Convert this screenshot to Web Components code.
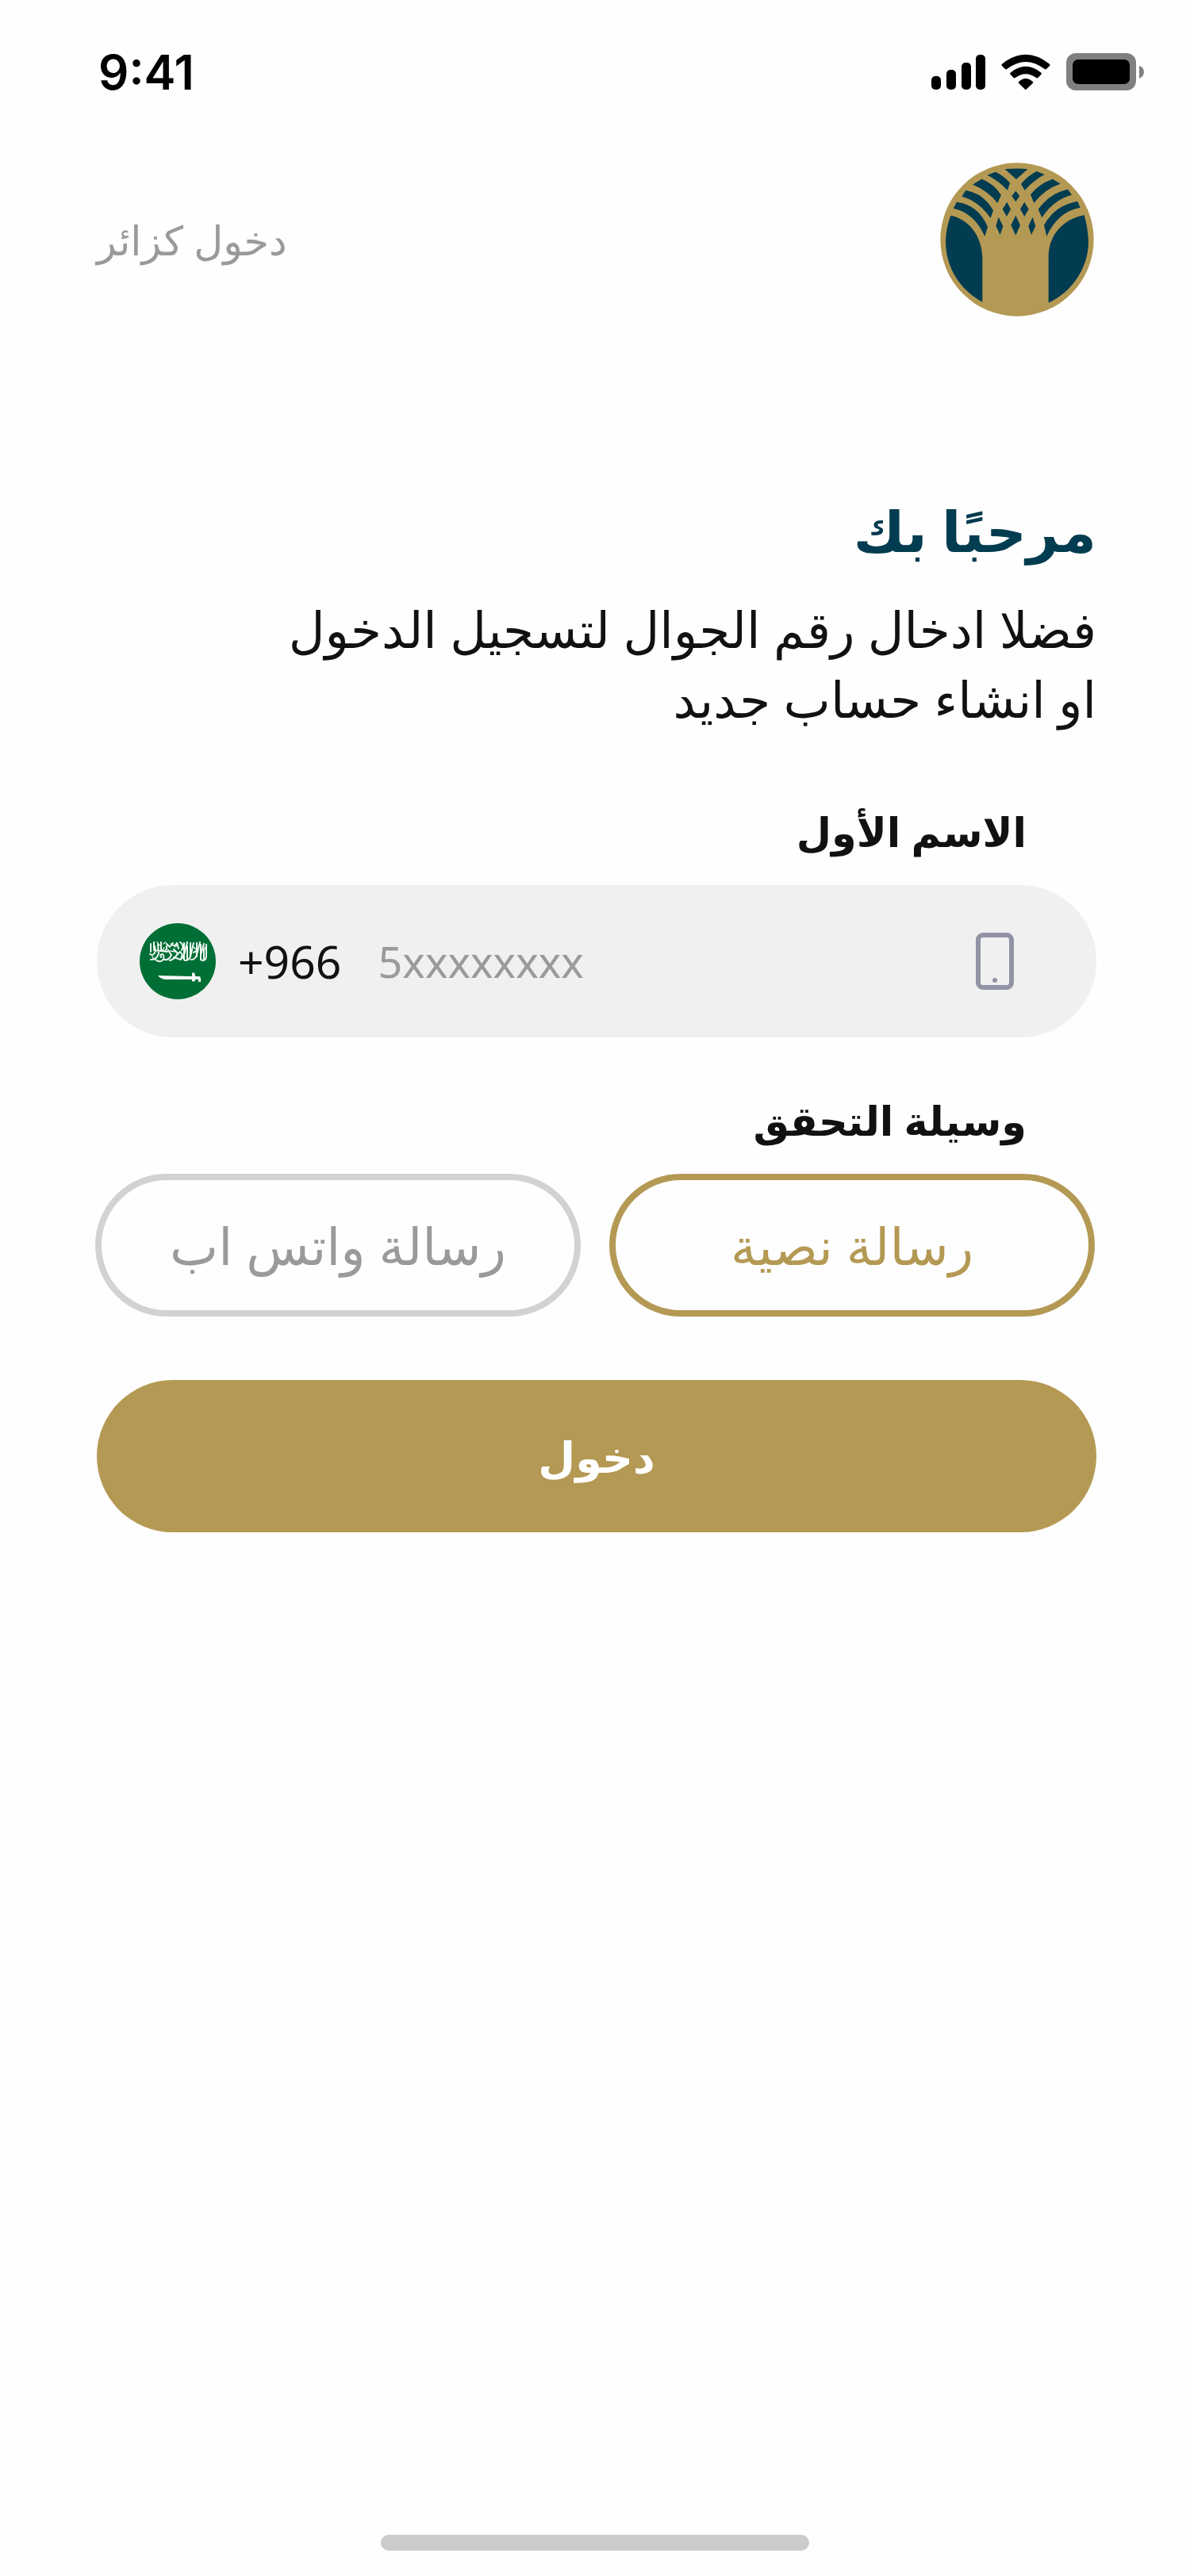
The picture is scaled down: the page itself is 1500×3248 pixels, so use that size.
<!DOCTYPE html>
<html lang="ar" dir="rtl">
<head>
<meta charset="utf-8">
<meta name="viewport" content="width=device-width, initial-scale=1">
<title>تسجيل الدخول</title>
<style>
  body { margin: 0; background: #fefefe; }
</style>
</head>
<body>
<login-page></login-page>
<script>
const define = (name, html) => {
  const template = document.createElement('template');
  template.innerHTML = html;
  customElements.define(name, class extends HTMLElement {
    constructor() {
      super();
      this.attachShadow({ mode: 'open' }).append(template.content.cloneNode(true));
    }
  });
};

define('status-bar', `
<style>
  :host { display: flex; direction: ltr; justify-content: space-between; align-items: center; height: 132px; padding: 50px 58px 0 124px; box-sizing: border-box; }
  time { font: 600 60px/82px Inter, sans-serif; color: #000; }
  .icons { display: flex; align-items: center; gap: 20px; }
  svg { display: block; }
</style>
<time>9:41</time>
<div class="icons">
  <svg width="68" height="44" viewBox="0 0 68 44" aria-hidden="true"><rect y="27" width="12" height="17" rx="5"/><rect x="19" y="19" width="12" height="25" rx="5"/><rect x="38" y="10" width="12" height="34" rx="5"/><rect x="56" width="12" height="44" rx="5"/></svg>
  <svg width="62" height="46" viewBox="366 86 187 138" aria-hidden="true"><path d="M369 124Q459 52 550 124Q553 128 550 131L538 143Q535 146 531 143Q459 88 388 143Q384 146 381 143L369 131Q366 128 369 124ZM401 157Q459 110 518 157Q521 160 518 163L506 176Q503 179 499 176Q459 147 420 176Q416 179 413 176L401 163Q398 160 401 157ZM433 191Q459 168 486 191Q489 194 486 197L462 220Q459 223 456 220L433 197Q430 194 433 191Z"/></svg>
  <svg width="98" height="48" viewBox="0 0 98 48" aria-hidden="true"><rect width="88" height="47" rx="12" fill="#808080"/><rect x="8" y="8" width="72" height="31" rx="7"/><path d="M92 16Q98 18 98 24Q98 29 92 32Z" fill="#808080"/></svg>
</div>`);

define('brand-logo', `
<style>:host { display: block; width: 194px; height: 194px; } svg { display: block; width: 100%; height: 100%; }</style>
<svg viewBox="105 75 582 582" role="img" aria-label="الشعار">
  <circle cx="396" cy="366" r="290" fill="#b49954"/>
  <g fill="#023c50">
    <path d="M145 275C215 290 263 352 265 435V602C185 560 125 475 126 370Q128 320 145 275ZM650 274C570 288 514 350 515 435V605C600 568 666 475 666 375Q664 320 650 274Z"/>
    <path d="M350 100Q396 95 436 100L393 138Z"/>
    <path d="M283 122L315 110Q350 128 369 152L360 180Q325 142 283 122ZM228 158L262 137Q310 155 336 198L322 228Q285 180 228 158ZM187 203L202 180Q270 192 306 256L296 285Q250 220 187 203ZM155 248L168 224Q250 235 285 318L274 354Q235 265 155 248Z"/>
    <path d="M500 120L470 108Q435 126 411 156L425 180Q455 145 500 120ZM560 155L530 137Q475 158 447 196L460 228Q500 175 560 155ZM603 197L588 176Q520 190 476 252L490 283Q535 215 603 197ZM635 245L625 222Q540 235 498 312L508 354Q550 260 635 245Z"/>
    <path d="M391 182L406 202L391 223L376 202ZM358 224L372 251L357 279L341 251ZM424 224L440 251L424 279L408 251ZM326 281L343 315L332 348L316 315ZM391 275L408 312L391 350L373 312ZM455 281L466 315L450 348L439 315Z"/>
  </g>
</svg>`);

define('top-bar', `
<style>
  :host { display: flex; justify-content: space-between; align-items: center; }
  a { font-size: 51px; line-height: 72px; color: #9a9a9a; text-decoration: none; }
</style>
<brand-logo></brand-logo>
<a href="#guest">دخول كزائر</a>`);

define('welcome-text', `
<style>
  :host { display: block; }
  h1 { margin: 0; font-size: 71px; line-height: 120px; font-weight: 700; color: #023c50; }
  p { margin: 20px 0 0; font-size: 63px; line-height: 88px; color: #111; }
</style>
<h1>مرحبًا بك</h1>
<p>فضلا ادخال رقم الجوال لتسجيل الدخول<br>او انشاء حساب جديد</p>`);

define('saudi-flag', `
<style>:host { display: block; flex: none; width: 96px; height: 96px; } svg { display: block; }</style>
<svg width="96" height="96" viewBox="0 0 96 96" role="img" aria-label="السعودية">
  <circle cx="48" cy="48" r="48" fill="#006f35"/>
  <g fill="none" stroke="#eef6f0" stroke-width="2" stroke-linecap="round" stroke-linejoin="round">
    <path d="M14 26V36M18 24V33M13 39Q18 42 20 35L19 29M14 46Q22 46 24 38L23 27M20 46C28 52 33 44 29 39Q25 39 27 43M27 24V34Q31 37 34 33V29M18 34L35 36M31 46Q37 47 40 40L36 34M34 26L38 30L42 25M40 26Q44 31 47 25L49 32M38 47Q44 46 48 38L43 33M43 43L52 46Q56 40 51 36L47 40M51 24Q57 28 53 34M56 25V46M60 24L55 44M60 29V46M64 25V40Q64 47 57 47M68 25L64 42M68 37Q72 33 72 40Q70 46 65 46M72 25V42M76 24L72 40M77 27V45M81 26L77 40M84 27V42Q83 49 77 46M81 33V45"/>
    <path stroke-width="1.3" d="M22 24L25 28M30 26L33 24M45 36L39 35M48 28L44 30M31 31L28 35M68 30L72 34M81 30L84 34M16 42L17 44M52 43L56 39"/>
  </g>
  <path d="M23 66L66 67V63Q69 61 70 65V67H75Q78 68 77 74H74V71H70Q70 75 66 73V71H32Q26 70 23 66Z" fill="#f6faf7"/>
</svg>`);

define('phone-field', `
<style>
  :host { display: block; }
  label { display: block; padding: 0 88px; font-size: 51px; line-height: 80px; font-weight: 700; color: #111; }
  .field { display: flex; direction: ltr; align-items: center; height: 192px; margin-top: 28px; padding: 0 104px 0 54px; border-radius: 96px; background: #f0f0f0; box-sizing: border-box; }
  .code { margin: 0 46px 0 28px; font-size: 57px; line-height: 80px; color: #111; }
  input { flex: 1; min-width: 0; padding: 0; border: 0; outline: 0; background: none; font: inherit; font-size: 54px; line-height: 80px; color: #111; }
  input::placeholder { color: #9a9a9a; opacity: 1; }
  svg { flex: none; display: block; }
</style>
<label for="phone">الاسم الأول</label>
<div class="field">
  <saudi-flag></saudi-flag>
  <span class="code">+966</span>
  <input id="phone" type="tel" placeholder="5xxxxxxxx">
  <svg width="48" height="72" viewBox="0 0 48 72" aria-hidden="true"><rect x="3" y="3" width="42" height="66" rx="6" fill="none" stroke="#9193a5" stroke-width="6"/><circle cx="24" cy="60" r="3" fill="#9193a5"/></svg>
</div>`);

define('verify-method', `
<style>
  :host { display: block; }
  fieldset { margin: 0; padding: 0; border: 0; min-width: 0; }
  legend { padding: 0 88px; font-size: 51px; line-height: 80px; font-weight: 700; color: #111; }
  .options { display: flex; gap: 36px; margin: 28px 2px 0 -2px; }
  label { flex: 1; display: flex; justify-content: center; align-items: center; height: 180px; box-sizing: border-box; border: 8px solid #d2d2d2; border-radius: 90px; font-size: 65px; line-height: 80px; color: #9a9a9a; cursor: pointer; }
  label:has(:checked) { border-color: #b49954; color: #b49954; }
  input { appearance: none; width: 0; height: 0; margin: 0; }
</style>
<fieldset>
  <legend>وسيلة التحقق</legend>
  <div class="options">
    <label><input type="radio" name="method" value="sms" checked>رسالة نصية</label>
    <label><input type="radio" name="method" value="whatsapp">رسالة واتس اب</label>
  </div>
</fieldset>`);

define('submit-button', `
<style>
  :host { display: block; }
  button { display: block; width: 100%; height: 192px; padding: 0; border: 0; border-radius: 96px; background: #b49954; color: #fff; font: inherit; font-size: 54px; line-height: 80px; font-weight: 700; cursor: pointer; }
</style>
<button type="submit"><slot></slot></button>`);

define('home-indicator', `
<style>
  :host { display: flex; justify-content: center; padding-bottom: 32px; }
  span { width: 36%; height: 20px; border-radius: 10px; background: #cbcbcb; }
</style>
<span></span>`);

define('login-page', `
<style>
  :host { display: flex; flex-direction: column; min-height: 100vh; font-family: "Noto Sans", "DejaVu Sans", sans-serif; }
  main { flex: 1; padding: 73px 118px 0 122px; }
  top-bar { padding-inline-start: 3px; }
  welcome-text { margin-top: 210px; }
  phone-field { margin-top: 83px; }
  verify-method { margin-top: 64px; }
  submit-button { margin-top: 80px; }
</style>
<status-bar></status-bar>
<main>
  <top-bar></top-bar>
  <welcome-text></welcome-text>
  <phone-field></phone-field>
  <verify-method></verify-method>
  <submit-button>دخول</submit-button>
</main>
<home-indicator></home-indicator>`);
</script>
</body>
</html>
